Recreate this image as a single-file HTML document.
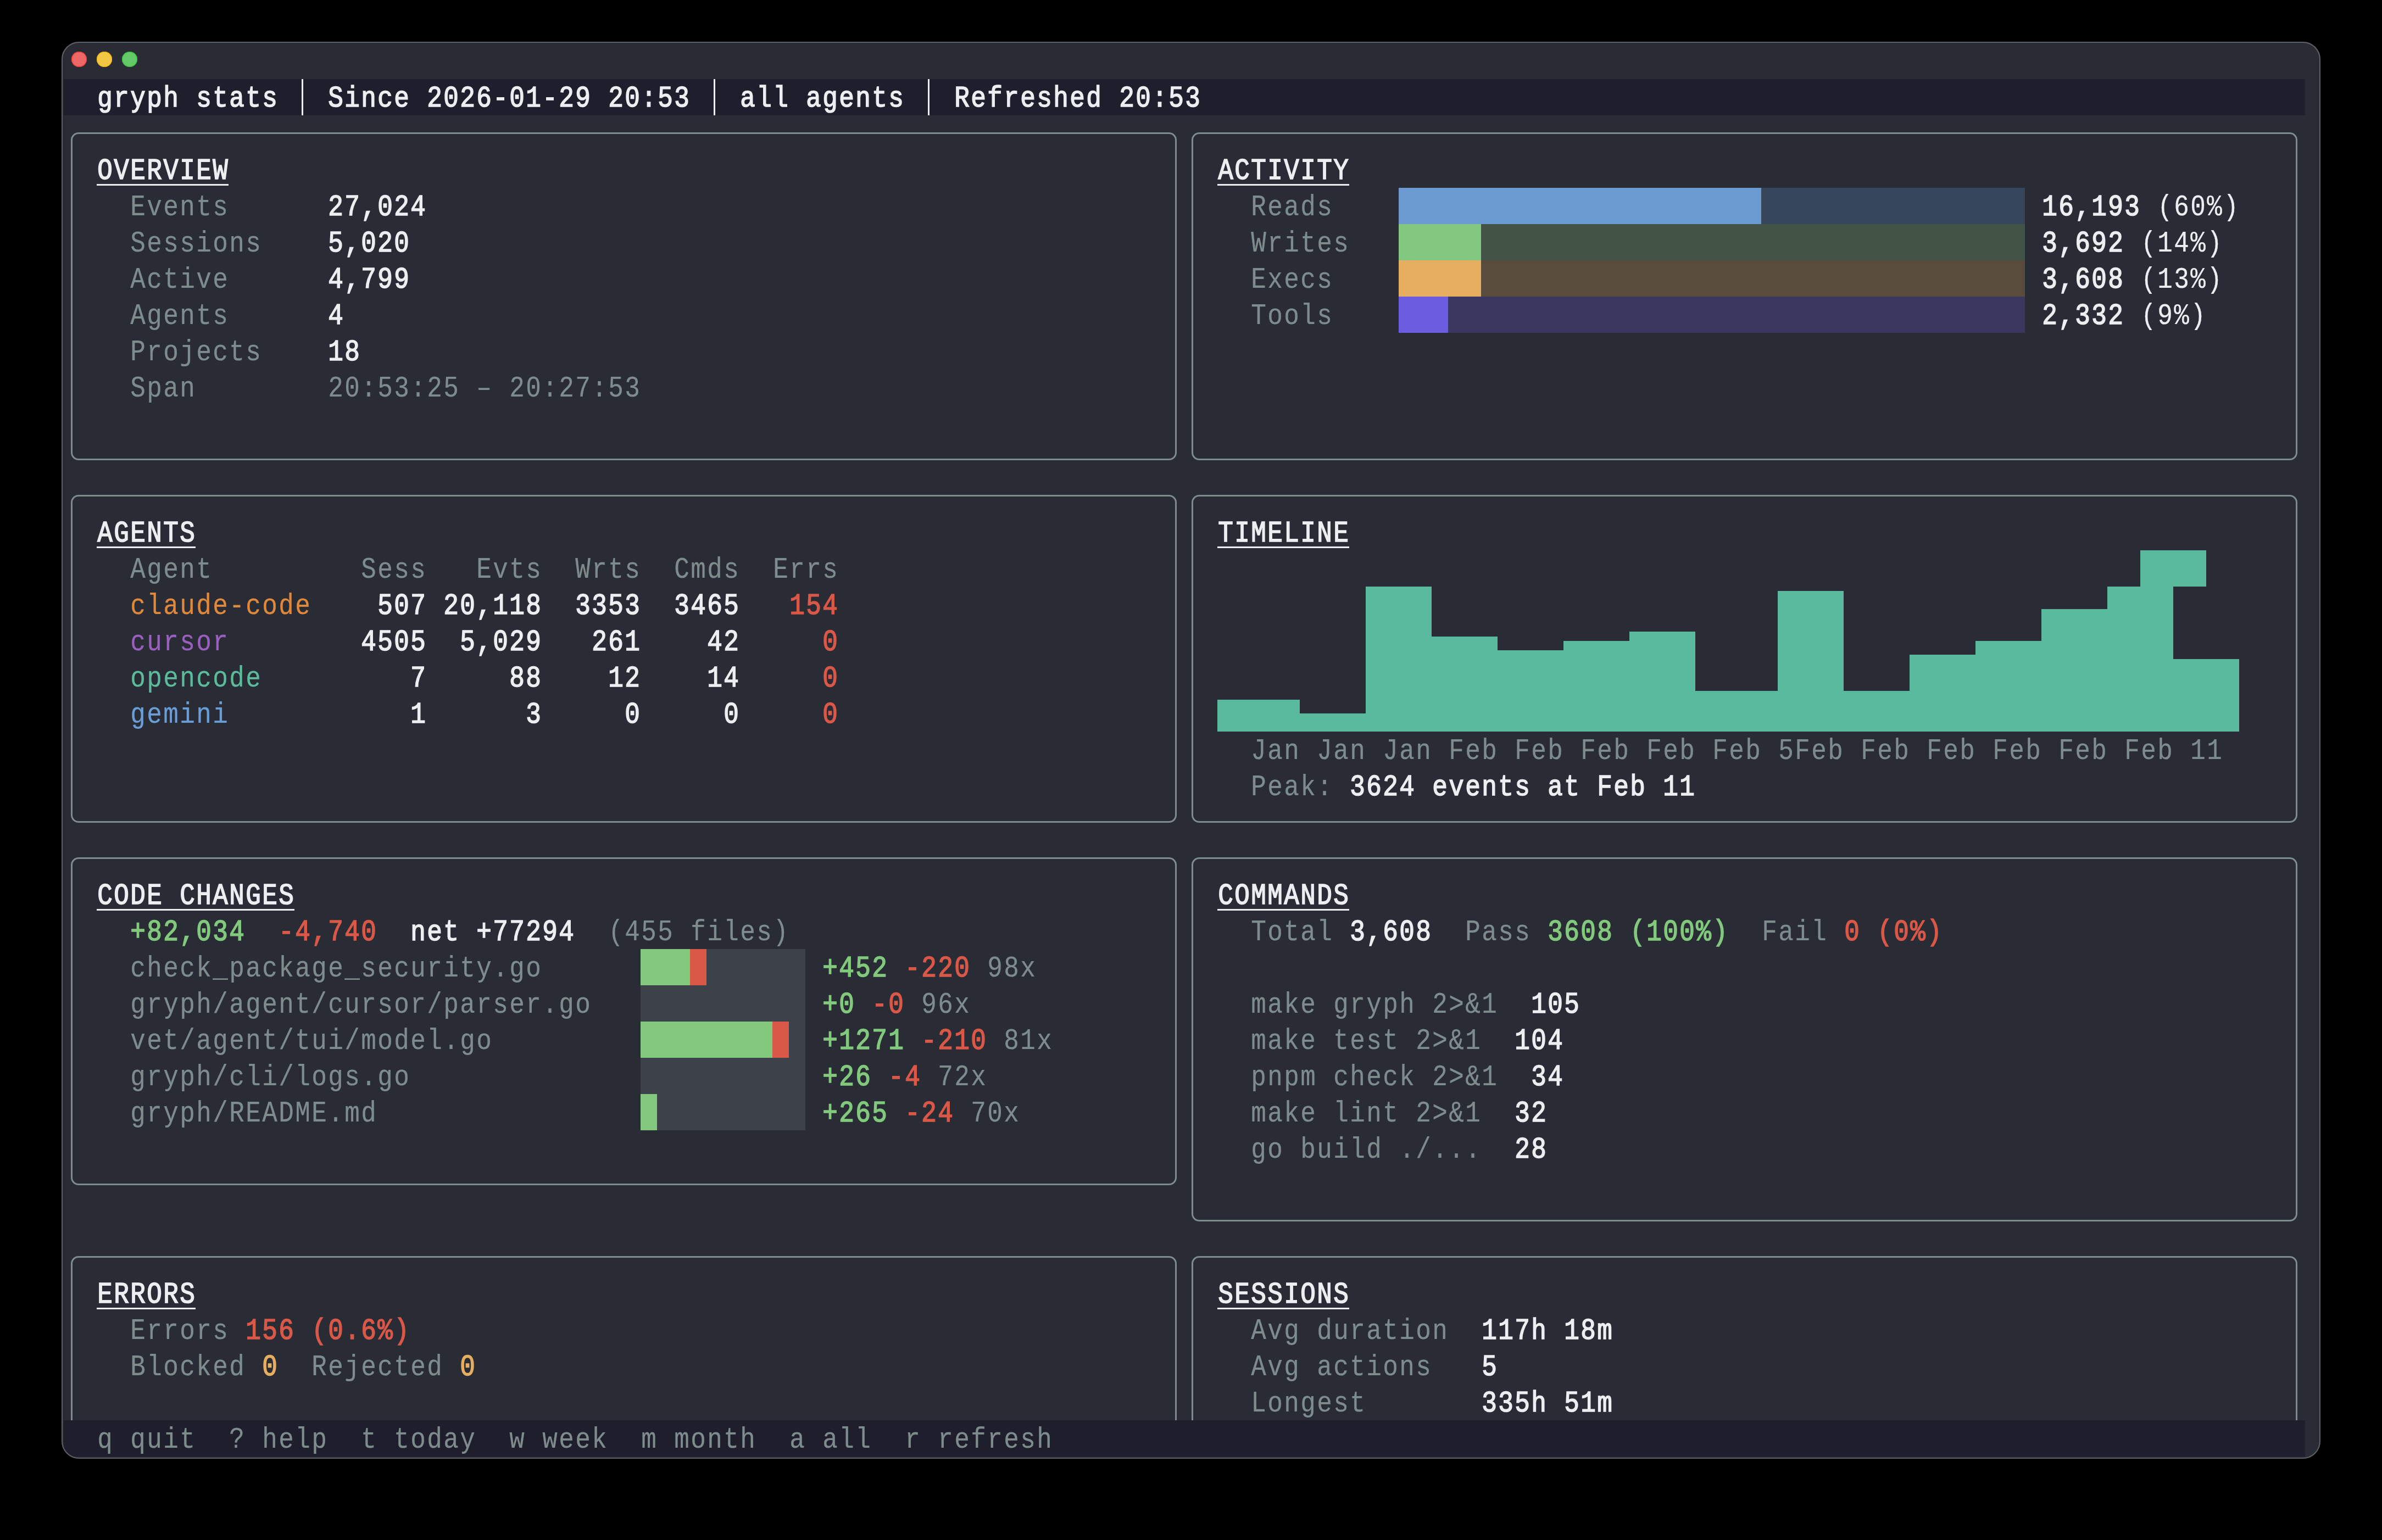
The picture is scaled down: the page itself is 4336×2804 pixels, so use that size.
<!DOCTYPE html>
<html><head><meta charset="utf-8"><style>
html,body{margin:0;padding:0;background:#000;width:4336px;height:2804px;overflow:hidden}
#win{position:absolute;left:112px;top:76px;width:4112px;height:2580px;background:#292c34;border-radius:32px;box-sizing:border-box;overflow:hidden}
#wb{position:absolute;left:112px;top:76px;width:4112px;height:2580px;border:2px solid #5d6066;border-radius:32px;box-sizing:border-box}
#c{position:absolute;left:-112px;top:-76px}
.r{position:absolute}
.t{position:absolute;font-family:"Liberation Mono",monospace;font-size:46px;line-height:66px;letter-spacing:2.3955px;white-space:pre;transform:scaleY(1.15);transform-origin:0 45.24px}
.b{font-weight:bold}
.bx{position:absolute;border:3px solid #7f8c8d;border-radius:14px}
.tl{position:absolute;width:28px;height:28px;border-radius:50%;top:94px}
</style></head><body>
<div id="win"><div id="c">
<div class="tl" style="left:130px;background:#ee6767;box-shadow:inset 0 0 0 1.2px #f03a34"></div>
<div class="tl" style="left:176px;background:#f2c744;box-shadow:inset 0 0 0 1.2px #f2b50c"></div>
<div class="tl" style="left:222px;background:#64c866;box-shadow:inset 0 0 0 1.2px #34bd3a"></div>
<div class="r" style="left:116px;top:144px;width:4080px;height:66px;background:#1f1e2c;"></div>
<div class="t" style="left:177.20px;top:149.26px;color:#eceff1;-webkit-text-stroke:1.4px #eceff1">gryph stats</div>
<div class="t" style="left:597.20px;top:149.26px;color:#eceff1;-webkit-text-stroke:1.4px #eceff1">Since 2026-01-29 20:53</div>
<div class="t" style="left:1347.20px;top:149.26px;color:#eceff1;-webkit-text-stroke:1.4px #eceff1">all agents</div>
<div class="t" style="left:1737.20px;top:149.26px;color:#eceff1;-webkit-text-stroke:1.4px #eceff1">Refreshed 20:53</div>
<div class="r" style="left:549px;top:144px;width:3px;height:66px;background:#eceff1;"></div>
<div class="r" style="left:1299px;top:144px;width:3px;height:66px;background:#eceff1;"></div>
<div class="r" style="left:1689px;top:144px;width:3px;height:66px;background:#eceff1;"></div>
<div class="bx" style="left:129px;top:241px;width:2007px;height:591px"></div>
<div class="bx" style="left:2169px;top:241px;width:2007px;height:591px"></div>
<div class="bx" style="left:129px;top:901px;width:2007px;height:591px"></div>
<div class="bx" style="left:2169px;top:901px;width:2007px;height:591px"></div>
<div class="bx" style="left:129px;top:1561px;width:2007px;height:591px"></div>
<div class="bx" style="left:2169px;top:1561px;width:2007px;height:657px"></div>
<div class="bx" style="left:129px;top:2287px;width:2007px;height:319px;border-bottom:none;border-bottom-left-radius:0;border-bottom-right-radius:0"></div>
<div class="bx" style="left:2169px;top:2287px;width:2007px;height:319px;border-bottom:none;border-bottom-left-radius:0;border-bottom-right-radius:0"></div>
<div class="t" style="left:177.20px;top:281.26px;color:#eceff1;-webkit-text-stroke:1.4px #eceff1">OVERVIEW</div>
<div class="r" style="left:176px;top:335px;width:240px;height:3px;background:#eceff1;"></div>
<div class="t" style="left:237.20px;top:347.26px;color:#7f8c8d;-webkit-text-stroke:0.2px #7f8c8d">Events</div>
<div class="t" style="left:597.20px;top:347.26px;color:#eceff1;-webkit-text-stroke:1.4px #eceff1">27,024</div>
<div class="t" style="left:237.20px;top:413.26px;color:#7f8c8d;-webkit-text-stroke:0.2px #7f8c8d">Sessions</div>
<div class="t" style="left:597.20px;top:413.26px;color:#eceff1;-webkit-text-stroke:1.4px #eceff1">5,020</div>
<div class="t" style="left:237.20px;top:479.26px;color:#7f8c8d;-webkit-text-stroke:0.2px #7f8c8d">Active</div>
<div class="t" style="left:597.20px;top:479.26px;color:#eceff1;-webkit-text-stroke:1.4px #eceff1">4,799</div>
<div class="t" style="left:237.20px;top:545.26px;color:#7f8c8d;-webkit-text-stroke:0.2px #7f8c8d">Agents</div>
<div class="t" style="left:597.20px;top:545.26px;color:#eceff1;-webkit-text-stroke:1.4px #eceff1">4</div>
<div class="t" style="left:237.20px;top:611.26px;color:#7f8c8d;-webkit-text-stroke:0.2px #7f8c8d">Projects</div>
<div class="t" style="left:597.20px;top:611.26px;color:#eceff1;-webkit-text-stroke:1.4px #eceff1">18</div>
<div class="t" style="left:237.20px;top:677.26px;color:#7f8c8d;-webkit-text-stroke:0.2px #7f8c8d">Span</div>
<div class="t" style="left:597.20px;top:677.26px;color:#7f8c8d;-webkit-text-stroke:0.2px #7f8c8d">20:53:25 – 20:27:53</div>
<div class="t" style="left:2217.20px;top:281.26px;color:#eceff1;-webkit-text-stroke:1.4px #eceff1">ACTIVITY</div>
<div class="r" style="left:2216px;top:335px;width:240px;height:3px;background:#eceff1;"></div>
<div class="t" style="left:2277.20px;top:347.26px;color:#7f8c8d;-webkit-text-stroke:0.2px #7f8c8d">Reads</div>
<div class="r" style="left:2546px;top:342px;width:1140px;height:66px;background:#36475b;"></div>
<div class="r" style="left:2546px;top:342px;width:660px;height:66px;background:#6b9bd1;"></div>
<div class="t" style="left:3717.20px;top:347.26px;color:#eceff1;-webkit-text-stroke:1.4px #eceff1">16,193</div>
<div class="t" style="left:3927.20px;top:347.26px;color:#eceff1;-webkit-text-stroke:0.2px #eceff1">(60%)</div>
<div class="t" style="left:2277.20px;top:413.26px;color:#7f8c8d;-webkit-text-stroke:0.2px #7f8c8d">Writes</div>
<div class="r" style="left:2546px;top:408px;width:1140px;height:66px;background:#415446;"></div>
<div class="r" style="left:2546px;top:408px;width:150px;height:66px;background:#82c880;"></div>
<div class="t" style="left:3717.20px;top:413.26px;color:#eceff1;-webkit-text-stroke:1.4px #eceff1">3,692</div>
<div class="t" style="left:3897.20px;top:413.26px;color:#eceff1;-webkit-text-stroke:0.2px #eceff1">(14%)</div>
<div class="t" style="left:2277.20px;top:479.26px;color:#7f8c8d;-webkit-text-stroke:0.2px #7f8c8d">Execs</div>
<div class="r" style="left:2546px;top:474px;width:1140px;height:66px;background:#5a4c3d;"></div>
<div class="r" style="left:2546px;top:474px;width:150px;height:66px;background:#e5ae60;"></div>
<div class="t" style="left:3717.20px;top:479.26px;color:#eceff1;-webkit-text-stroke:1.4px #eceff1">3,608</div>
<div class="t" style="left:3897.20px;top:479.26px;color:#eceff1;-webkit-text-stroke:0.2px #eceff1">(13%)</div>
<div class="t" style="left:2277.20px;top:545.26px;color:#7f8c8d;-webkit-text-stroke:0.2px #7f8c8d">Tools</div>
<div class="r" style="left:2546px;top:540px;width:1140px;height:66px;background:#3a3860;"></div>
<div class="r" style="left:2546px;top:540px;width:90px;height:66px;background:#6c5ce0;"></div>
<div class="t" style="left:3717.20px;top:545.26px;color:#eceff1;-webkit-text-stroke:1.4px #eceff1">2,332</div>
<div class="t" style="left:3897.20px;top:545.26px;color:#eceff1;-webkit-text-stroke:0.2px #eceff1">(9%)</div>
<div class="t" style="left:177.20px;top:941.26px;color:#eceff1;-webkit-text-stroke:1.4px #eceff1">AGENTS</div>
<div class="r" style="left:176px;top:995px;width:180px;height:3px;background:#eceff1;"></div>
<div class="t" style="left:237.20px;top:1007.26px;color:#7f8c8d;-webkit-text-stroke:0.2px #7f8c8d">Agent</div>
<div class="t" style="left:657.20px;top:1007.26px;color:#7f8c8d;-webkit-text-stroke:0.2px #7f8c8d">Sess</div>
<div class="t" style="left:867.20px;top:1007.26px;color:#7f8c8d;-webkit-text-stroke:0.2px #7f8c8d">Evts</div>
<div class="t" style="left:1047.20px;top:1007.26px;color:#7f8c8d;-webkit-text-stroke:0.2px #7f8c8d">Wrts</div>
<div class="t" style="left:1227.20px;top:1007.26px;color:#7f8c8d;-webkit-text-stroke:0.2px #7f8c8d">Cmds</div>
<div class="t" style="left:1407.20px;top:1007.26px;color:#7f8c8d;-webkit-text-stroke:0.2px #7f8c8d">Errs</div>
<div class="t" style="left:237.20px;top:1073.26px;color:#e0883b;-webkit-text-stroke:0.2px #e0883b">claude-code</div>
<div class="t" style="left:687.20px;top:1073.26px;color:#eceff1;-webkit-text-stroke:1.4px #eceff1">507</div>
<div class="t" style="left:807.20px;top:1073.26px;color:#eceff1;-webkit-text-stroke:1.4px #eceff1">20,118</div>
<div class="t" style="left:1047.20px;top:1073.26px;color:#eceff1;-webkit-text-stroke:1.4px #eceff1">3353</div>
<div class="t" style="left:1227.20px;top:1073.26px;color:#eceff1;-webkit-text-stroke:1.4px #eceff1">3465</div>
<div class="t" style="left:1437.20px;top:1073.26px;color:#da5848;-webkit-text-stroke:1.4px #da5848">154</div>
<div class="t" style="left:237.20px;top:1139.26px;color:#9b5fbf;-webkit-text-stroke:0.2px #9b5fbf">cursor</div>
<div class="t" style="left:657.20px;top:1139.26px;color:#eceff1;-webkit-text-stroke:1.4px #eceff1">4505</div>
<div class="t" style="left:837.20px;top:1139.26px;color:#eceff1;-webkit-text-stroke:1.4px #eceff1">5,029</div>
<div class="t" style="left:1077.20px;top:1139.26px;color:#eceff1;-webkit-text-stroke:1.4px #eceff1">261</div>
<div class="t" style="left:1287.20px;top:1139.26px;color:#eceff1;-webkit-text-stroke:1.4px #eceff1">42</div>
<div class="t" style="left:1497.20px;top:1139.26px;color:#da5848;-webkit-text-stroke:1.4px #da5848">0</div>
<div class="t" style="left:237.20px;top:1205.26px;color:#5bbb9c;-webkit-text-stroke:0.2px #5bbb9c">opencode</div>
<div class="t" style="left:747.20px;top:1205.26px;color:#eceff1;-webkit-text-stroke:1.4px #eceff1">7</div>
<div class="t" style="left:927.20px;top:1205.26px;color:#eceff1;-webkit-text-stroke:1.4px #eceff1">88</div>
<div class="t" style="left:1107.20px;top:1205.26px;color:#eceff1;-webkit-text-stroke:1.4px #eceff1">12</div>
<div class="t" style="left:1287.20px;top:1205.26px;color:#eceff1;-webkit-text-stroke:1.4px #eceff1">14</div>
<div class="t" style="left:1497.20px;top:1205.26px;color:#da5848;-webkit-text-stroke:1.4px #da5848">0</div>
<div class="t" style="left:237.20px;top:1271.26px;color:#6b9ed6;-webkit-text-stroke:0.2px #6b9ed6">gemini</div>
<div class="t" style="left:747.20px;top:1271.26px;color:#eceff1;-webkit-text-stroke:1.4px #eceff1">1</div>
<div class="t" style="left:957.20px;top:1271.26px;color:#eceff1;-webkit-text-stroke:1.4px #eceff1">3</div>
<div class="t" style="left:1137.20px;top:1271.26px;color:#eceff1;-webkit-text-stroke:1.4px #eceff1">0</div>
<div class="t" style="left:1317.20px;top:1271.26px;color:#eceff1;-webkit-text-stroke:1.4px #eceff1">0</div>
<div class="t" style="left:1497.20px;top:1271.26px;color:#da5848;-webkit-text-stroke:1.4px #da5848">0</div>
<div class="t" style="left:2217.20px;top:941.26px;color:#eceff1;-webkit-text-stroke:1.4px #eceff1">TIMELINE</div>
<div class="r" style="left:2216px;top:995px;width:240px;height:3px;background:#eceff1;"></div>
<div class="r" style="left:2216px;top:1274px;width:150px;height:58px;background:#5aba9d;"></div>
<div class="r" style="left:2366px;top:1299px;width:120px;height:33px;background:#5aba9d;"></div>
<div class="r" style="left:2486px;top:1068px;width:120px;height:264px;background:#5aba9d;"></div>
<div class="r" style="left:2606px;top:1159px;width:120px;height:173px;background:#5aba9d;"></div>
<div class="r" style="left:2726px;top:1184px;width:120px;height:148px;background:#5aba9d;"></div>
<div class="r" style="left:2846px;top:1167px;width:120px;height:165px;background:#5aba9d;"></div>
<div class="r" style="left:2966px;top:1150px;width:120px;height:182px;background:#5aba9d;"></div>
<div class="r" style="left:3086px;top:1258px;width:150px;height:74px;background:#5aba9d;"></div>
<div class="r" style="left:3236px;top:1076px;width:120px;height:256px;background:#5aba9d;"></div>
<div class="r" style="left:3356px;top:1258px;width:120px;height:74px;background:#5aba9d;"></div>
<div class="r" style="left:3476px;top:1192px;width:120px;height:140px;background:#5aba9d;"></div>
<div class="r" style="left:3596px;top:1167px;width:120px;height:165px;background:#5aba9d;"></div>
<div class="r" style="left:3716px;top:1109px;width:120px;height:223px;background:#5aba9d;"></div>
<div class="r" style="left:3836px;top:1068px;width:60px;height:264px;background:#5aba9d;"></div>
<div class="r" style="left:3896px;top:1002px;width:60px;height:330px;background:#5aba9d;"></div>
<div class="r" style="left:4016px;top:1200px;width:60px;height:132px;background:#5aba9d;"></div>
<div class="r" style="left:3956px;top:1002px;width:60px;height:66px;background:#5aba9d;"></div>
<div class="r" style="left:3956px;top:1200px;width:60px;height:132px;background:#5aba9d;"></div>
<div class="t" style="left:2217.20px;top:1337.26px;color:#7f8c8d;-webkit-text-stroke:0.2px #7f8c8d">  Jan Jan Jan Feb Feb Feb Feb Feb 5Feb Feb Feb Feb Feb Feb 11</div>
<div class="t" style="left:2277.20px;top:1403.26px;color:#7f8c8d;-webkit-text-stroke:0.2px #7f8c8d">Peak: </div>
<div class="t" style="left:2457.20px;top:1403.26px;color:#eceff1;-webkit-text-stroke:1.4px #eceff1">3624 events at Feb 11</div>
<div class="t" style="left:177.20px;top:1601.26px;color:#eceff1;-webkit-text-stroke:1.4px #eceff1">CODE CHANGES</div>
<div class="r" style="left:176px;top:1655px;width:360px;height:3px;background:#eceff1;"></div>
<div class="t" style="left:237.20px;top:1667.26px;color:#82c97d;-webkit-text-stroke:1.4px #82c97d">+82,034</div>
<div class="t" style="left:507.20px;top:1667.26px;color:#da5848;-webkit-text-stroke:1.4px #da5848">-4,740</div>
<div class="t" style="left:747.20px;top:1667.26px;color:#eceff1;-webkit-text-stroke:1.4px #eceff1">net +77294</div>
<div class="t" style="left:1107.20px;top:1667.26px;color:#7f8c8d;-webkit-text-stroke:0.2px #7f8c8d">(455 files)</div>
<div class="t" style="left:237.20px;top:1733.26px;color:#7f8c8d;-webkit-text-stroke:0.2px #7f8c8d">check_package_security.go</div>
<div class="r" style="left:1166px;top:1728px;width:300px;height:66px;background:#3d4149;"></div>
<div class="r" style="left:1166px;top:1728px;width:90px;height:66px;background:#82c97d;"></div>
<div class="r" style="left:1256px;top:1728px;width:30px;height:66px;background:#da5848;"></div>
<div class="t" style="left:1497.20px;top:1733.26px;color:#82c97d;-webkit-text-stroke:1.4px #82c97d">+452</div>
<div class="t" style="left:1647.20px;top:1733.26px;color:#da5848;-webkit-text-stroke:1.4px #da5848">-220</div>
<div class="t" style="left:1797.20px;top:1733.26px;color:#7f8c8d;-webkit-text-stroke:0.2px #7f8c8d">98x</div>
<div class="t" style="left:237.20px;top:1799.26px;color:#7f8c8d;-webkit-text-stroke:0.2px #7f8c8d">gryph/agent/cursor/parser.go</div>
<div class="r" style="left:1166px;top:1794px;width:300px;height:66px;background:#3d4149;"></div>
<div class="t" style="left:1497.20px;top:1799.26px;color:#82c97d;-webkit-text-stroke:1.4px #82c97d">+0</div>
<div class="t" style="left:1587.20px;top:1799.26px;color:#da5848;-webkit-text-stroke:1.4px #da5848">-0</div>
<div class="t" style="left:1677.20px;top:1799.26px;color:#7f8c8d;-webkit-text-stroke:0.2px #7f8c8d">96x</div>
<div class="t" style="left:237.20px;top:1865.26px;color:#7f8c8d;-webkit-text-stroke:0.2px #7f8c8d">vet/agent/tui/model.go</div>
<div class="r" style="left:1166px;top:1860px;width:300px;height:66px;background:#3d4149;"></div>
<div class="r" style="left:1166px;top:1860px;width:240px;height:66px;background:#82c97d;"></div>
<div class="r" style="left:1406px;top:1860px;width:30px;height:66px;background:#da5848;"></div>
<div class="t" style="left:1497.20px;top:1865.26px;color:#82c97d;-webkit-text-stroke:1.4px #82c97d">+1271</div>
<div class="t" style="left:1677.20px;top:1865.26px;color:#da5848;-webkit-text-stroke:1.4px #da5848">-210</div>
<div class="t" style="left:1827.20px;top:1865.26px;color:#7f8c8d;-webkit-text-stroke:0.2px #7f8c8d">81x</div>
<div class="t" style="left:237.20px;top:1931.26px;color:#7f8c8d;-webkit-text-stroke:0.2px #7f8c8d">gryph/cli/logs.go</div>
<div class="r" style="left:1166px;top:1926px;width:300px;height:66px;background:#3d4149;"></div>
<div class="t" style="left:1497.20px;top:1931.26px;color:#82c97d;-webkit-text-stroke:1.4px #82c97d">+26</div>
<div class="t" style="left:1617.20px;top:1931.26px;color:#da5848;-webkit-text-stroke:1.4px #da5848">-4</div>
<div class="t" style="left:1707.20px;top:1931.26px;color:#7f8c8d;-webkit-text-stroke:0.2px #7f8c8d">72x</div>
<div class="t" style="left:237.20px;top:1997.26px;color:#7f8c8d;-webkit-text-stroke:0.2px #7f8c8d">gryph/README.md</div>
<div class="r" style="left:1166px;top:1992px;width:300px;height:66px;background:#3d4149;"></div>
<div class="r" style="left:1166px;top:1992px;width:30px;height:66px;background:#82c97d;"></div>
<div class="t" style="left:1497.20px;top:1997.26px;color:#82c97d;-webkit-text-stroke:1.4px #82c97d">+265</div>
<div class="t" style="left:1647.20px;top:1997.26px;color:#da5848;-webkit-text-stroke:1.4px #da5848">-24</div>
<div class="t" style="left:1767.20px;top:1997.26px;color:#7f8c8d;-webkit-text-stroke:0.2px #7f8c8d">70x</div>
<div class="t" style="left:2217.20px;top:1601.26px;color:#eceff1;-webkit-text-stroke:1.4px #eceff1">COMMANDS</div>
<div class="r" style="left:2216px;top:1655px;width:240px;height:3px;background:#eceff1;"></div>
<div class="t" style="left:2277.20px;top:1667.26px;color:#7f8c8d;-webkit-text-stroke:0.2px #7f8c8d">Total</div>
<div class="t" style="left:2457.20px;top:1667.26px;color:#eceff1;-webkit-text-stroke:1.4px #eceff1">3,608</div>
<div class="t" style="left:2667.20px;top:1667.26px;color:#7f8c8d;-webkit-text-stroke:0.2px #7f8c8d">Pass</div>
<div class="t" style="left:2817.20px;top:1667.26px;color:#82c97d;-webkit-text-stroke:1.4px #82c97d">3608 (100%)</div>
<div class="t" style="left:3207.20px;top:1667.26px;color:#7f8c8d;-webkit-text-stroke:0.2px #7f8c8d">Fail</div>
<div class="t" style="left:3357.20px;top:1667.26px;color:#da5848;-webkit-text-stroke:1.4px #da5848">0 (0%)</div>
<div class="t" style="left:2277.20px;top:1799.26px;color:#7f8c8d;-webkit-text-stroke:0.2px #7f8c8d">make gryph 2&gt;&amp;1</div>
<div class="t" style="left:2787.20px;top:1799.26px;color:#eceff1;-webkit-text-stroke:1.4px #eceff1">105</div>
<div class="t" style="left:2277.20px;top:1865.26px;color:#7f8c8d;-webkit-text-stroke:0.2px #7f8c8d">make test 2&gt;&amp;1</div>
<div class="t" style="left:2757.20px;top:1865.26px;color:#eceff1;-webkit-text-stroke:1.4px #eceff1">104</div>
<div class="t" style="left:2277.20px;top:1931.26px;color:#7f8c8d;-webkit-text-stroke:0.2px #7f8c8d">pnpm check 2&gt;&amp;1</div>
<div class="t" style="left:2787.20px;top:1931.26px;color:#eceff1;-webkit-text-stroke:1.4px #eceff1">34</div>
<div class="t" style="left:2277.20px;top:1997.26px;color:#7f8c8d;-webkit-text-stroke:0.2px #7f8c8d">make lint 2&gt;&amp;1</div>
<div class="t" style="left:2757.20px;top:1997.26px;color:#eceff1;-webkit-text-stroke:1.4px #eceff1">32</div>
<div class="t" style="left:2277.20px;top:2063.26px;color:#7f8c8d;-webkit-text-stroke:0.2px #7f8c8d">go build ./...</div>
<div class="t" style="left:2757.20px;top:2063.26px;color:#eceff1;-webkit-text-stroke:1.4px #eceff1">28</div>
<div class="t" style="left:177.20px;top:2327.26px;color:#eceff1;-webkit-text-stroke:1.4px #eceff1">ERRORS</div>
<div class="r" style="left:176px;top:2381px;width:180px;height:3px;background:#eceff1;"></div>
<div class="t" style="left:237.20px;top:2393.26px;color:#7f8c8d;-webkit-text-stroke:0.2px #7f8c8d">Errors</div>
<div class="t" style="left:447.20px;top:2393.26px;color:#da5848;-webkit-text-stroke:1.4px #da5848">156 (0.6%)</div>
<div class="t" style="left:237.20px;top:2459.26px;color:#7f8c8d;-webkit-text-stroke:0.2px #7f8c8d">Blocked</div>
<div class="t" style="left:477.20px;top:2459.26px;color:#e5ae60;-webkit-text-stroke:1.4px #e5ae60">0</div>
<div class="t" style="left:567.20px;top:2459.26px;color:#7f8c8d;-webkit-text-stroke:0.2px #7f8c8d">Rejected</div>
<div class="t" style="left:837.20px;top:2459.26px;color:#e5ae60;-webkit-text-stroke:1.4px #e5ae60">0</div>
<div class="t" style="left:2217.20px;top:2327.26px;color:#eceff1;-webkit-text-stroke:1.4px #eceff1">SESSIONS</div>
<div class="r" style="left:2216px;top:2381px;width:240px;height:3px;background:#eceff1;"></div>
<div class="t" style="left:2277.20px;top:2393.26px;color:#7f8c8d;-webkit-text-stroke:0.2px #7f8c8d">Avg duration</div>
<div class="t" style="left:2697.20px;top:2393.26px;color:#eceff1;-webkit-text-stroke:1.4px #eceff1">117h 18m</div>
<div class="t" style="left:2277.20px;top:2459.26px;color:#7f8c8d;-webkit-text-stroke:0.2px #7f8c8d">Avg actions</div>
<div class="t" style="left:2697.20px;top:2459.26px;color:#eceff1;-webkit-text-stroke:1.4px #eceff1">5</div>
<div class="t" style="left:2277.20px;top:2525.26px;color:#7f8c8d;-webkit-text-stroke:0.2px #7f8c8d">Longest</div>
<div class="t" style="left:2697.20px;top:2525.26px;color:#eceff1;-webkit-text-stroke:1.4px #eceff1">335h 51m</div>
<div class="r" style="left:116px;top:2586px;width:4080px;height:66px;background:#1f1e2c;"></div>
<div class="t" style="left:177.20px;top:2591.26px;color:#7f8c8d;-webkit-text-stroke:0.2px #7f8c8d">q quit  ? help  t today  w week  m month  a all  r refresh</div>
</div></div>
<div id="wb"></div>
</body></html>
